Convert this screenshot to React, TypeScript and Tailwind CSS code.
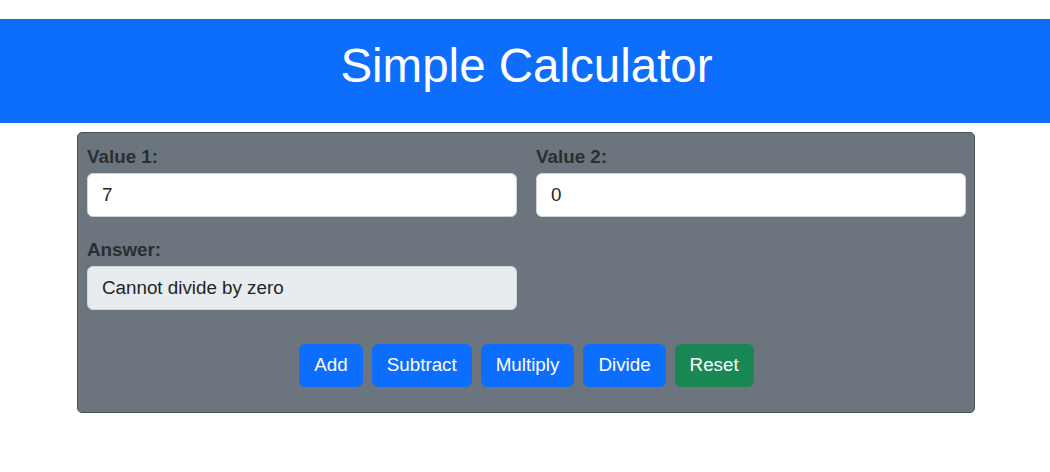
import React from "react";

export default function App() {
  return (
    <div className="min-h-[472px] bg-white text-[#212529]" style={{ fontFamily: '"Liberation Sans", Arial, sans-serif' }}>
      <div className="mt-[19px] h-[104px] bg-[#0d6efd] pt-[18px] text-center">
        <h1 className="ml-[3px] text-[47.5px] font-normal leading-[1.2] text-white">Simple Calculator</h1>
      </div>
      <div className="ml-[77px] mr-[75px] mt-[9px] rounded-[5px] border border-[#495057] bg-[#6c757d] pb-[25px] pl-[9px] pr-[8px] pt-[10px]">
        <div className="grid grid-cols-2 gap-x-[19px]">
          <div>
            <label className="block text-[18.8px] font-bold leading-[27px] text-[#2b2e31]">Value 1:</label>
            <input
              readOnly
              value="7"
              className="mt-[3px] block h-[44px] w-full rounded-[6px] border border-[#ced4da] bg-white px-[14px] text-[18.8px] text-[#212529] outline-none"
            />
          </div>
          <div>
            <label className="block text-[18.8px] font-bold leading-[27px] text-[#2b2e31]">Value 2:</label>
            <input
              readOnly
              value="0"
              className="mt-[3px] block h-[44px] w-full rounded-[6px] border border-[#ced4da] bg-white px-[14px] text-[18.8px] text-[#212529] outline-none"
            />
          </div>
          <div className="mt-[19px]">
            <label className="block text-[18.8px] font-bold leading-[27px] text-[#2b2e31]">Answer:</label>
            <div className="mt-[3px] flex h-[44px] w-full items-center rounded-[6px] border border-[#ced4da] bg-[#e9ecef] px-[14px] text-[18.8px] text-[#212529]">
              Cannot divide by zero
            </div>
          </div>
        </div>
        <div className="mt-[34px] flex justify-center gap-[9px]">
          {["Add", "Subtract", "Multiply", "Divide"].map((t) => (
            <button key={t} className="h-[43px] rounded-[6px] bg-[#0d6efd] px-[15px] text-[18.8px] text-white">
              {t}
            </button>
          ))}
          <button className="h-[43px] rounded-[6px] bg-[#198754] px-[15px] text-[18.8px] text-white">Reset</button>
        </div>
      </div>
    </div>
  );
}
